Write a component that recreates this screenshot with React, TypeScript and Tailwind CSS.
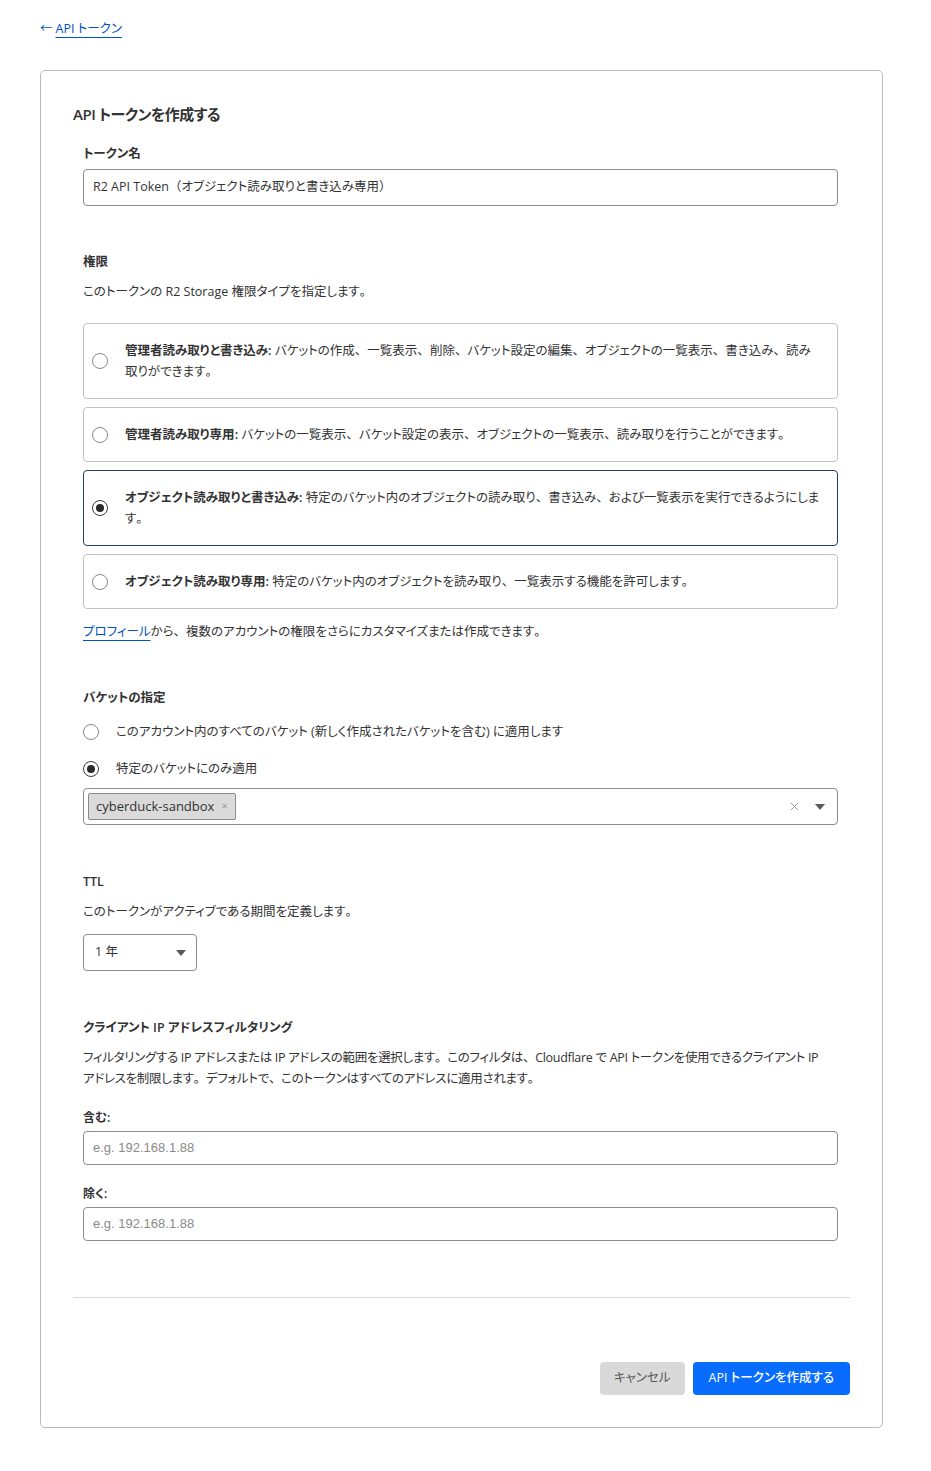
import React from "react";

const font = "font-['Open_Sans','Noto_Sans_CJK_JP',sans-serif] [font-feature-settings:'palt']";

// Proportional kana, but keep Japanese punctuation at full width.
function jp(text: string) {
  return text.split(/([、。（）])/).map((part, i) =>
    /^[、。（）]$/.test(part) ? (
      <span key={i} className="[font-feature-settings:normal]">
        {part}
      </span>
    ) : (
      <React.Fragment key={i}>{part}</React.Fragment>
    )
  );
}

function Radio({ checked }: { checked?: boolean }) {
  return (
    <span
      className={
        "flex h-4 w-4 shrink-0 items-center justify-center rounded-full border bg-white " +
        (checked ? "border-[#3c3c3c]" : "border-[#8a8a8a]")
      }
    >
      {checked && <span className="h-2 w-2 rounded-full bg-[#2b2b2b]" />}
    </span>
  );
}

function Caret() {
  return (
    <svg width="10" height="6" viewBox="0 0 10 6" className="shrink-0">
      <path d="M0 0 H10 L5 6 Z" fill="#595959" />
    </svg>
  );
}

function PermissionCard({
  title,
  body,
  checked,
}: {
  title: string;
  body: string;
  checked?: boolean;
}) {
  return (
    <div
      className={
        "flex items-center rounded-[4px] border bg-white py-4 pl-2 pr-4 " +
        (checked ? "border-[#1f3f63]" : "border-[#c2c2c2]")
      }
    >
      <Radio checked={checked} />
      <p className="ml-[17px] text-[12.5px] leading-[21px] text-[#333]">
        <span className="font-semibold">{title}:</span> {jp(body)}
      </p>
    </div>
  );
}

export default function App() {
  return (
    <div className={"min-h-[1471px] bg-white pb-11 pl-10 pr-12 pt-[19px] " + font}>
      <a href="#" className="flex items-center text-[12.5px] leading-5 text-[#0051c3]">
        <span className="mr-[3px]">←</span>
        <span className="underline decoration-[#0051c3] underline-offset-[4px]">API トークン</span>
      </a>

      <div className="mt-[31px] rounded-[5px] border border-[#bababa] bg-white px-8 pb-8 pt-8">
        <h1 className="text-[15px] font-semibold leading-[22px] tracking-[-0.5px] text-[#333]">API トークンを作成する</h1>

        <div className="pl-[10px] pr-[12px]">
          {/* token name */}
          <label className="mt-[19px] block text-[12.5px] font-semibold leading-5 text-[#333]">トークン名</label>
          <div className="mt-[5px] flex h-[37px] items-center rounded-[4px] border border-[#8c8c8c] px-[9px] text-[12.5px] text-[#333]">
            {jp("R2 API Token（オブジェクト読み取りと書き込み専用）")}
          </div>

          {/* permissions */}
          <h2 className="mt-[46px] text-[12.5px] font-semibold leading-5 text-[#333]">権限</h2>
          <p className="mt-[10px] text-[12.5px] leading-5 text-[#333]">
            {jp("このトークンの R2 Storage 権限タイプを指定します。")}
          </p>
          <div className="mt-[21px] flex flex-col gap-2">
            <PermissionCard
              title="管理者読み取りと書き込み"
              body="バケットの作成、一覧表示、削除、バケット設定の編集、オブジェクトの一覧表示、書き込み、読み取りができます。"
            />
            <PermissionCard
              title="管理者読み取り専用"
              body="バケットの一覧表示、バケット設定の表示、オブジェクトの一覧表示、読み取りを行うことができます。"
            />
            <PermissionCard
              checked
              title="オブジェクト読み取りと書き込み"
              body="特定のバケット内のオブジェクトの読み取り、書き込み、および一覧表示を実行できるようにします。"
            />
            <PermissionCard
              title="オブジェクト読み取り専用"
              body="特定のバケット内のオブジェクトを読み取り、一覧表示する機能を許可します。"
            />
          </div>
          <p className="mt-[13px] text-[12.5px] leading-5 text-[#333]">
            <a href="#" className="text-[#0051c3] underline underline-offset-[4px]">プロフィール</a>
            {jp("から、複数のアカウントの権限をさらにカスタマイズまたは作成できます。")}
          </p>

          {/* bucket scope */}
          <h2 className="mt-[46px] text-[12.5px] font-semibold leading-5 text-[#333]">バケットの指定</h2>
          <div className="mt-[14px] flex items-center text-[12.5px] leading-5 text-[#333]">
            <Radio />
            <span className="ml-[17px]">このアカウント内のすべてのバケット (新しく作成されたバケットを含む) に適用します</span>
          </div>
          <div className="mt-[17px] flex items-center text-[12.5px] leading-5 text-[#333]">
            <Radio checked />
            <span className="ml-[17px]">特定のバケットにのみ適用</span>
          </div>
          <div className="mt-[9px] flex h-[37px] items-center rounded-[4px] border border-[#8c8c8c] pl-1 pr-[12px]">
            <span className="flex h-[27px] items-center rounded-[2px] border border-[#8c8c8c] bg-[#dadada] pl-[7px] pr-[7px] text-[13px] text-[#333]">
              cyberduck-sandbox
              <span className="ml-[7px] text-[11px] text-[#999]">×</span>
            </span>
            <span className="ml-auto flex items-center gap-[16px]">
              <svg width="9" height="9" viewBox="0 0 9 9">
                <path d="M1 1 L8 8 M8 1 L1 8" stroke="#9a9a9a" strokeWidth="1" />
              </svg>
              <Caret />
            </span>
          </div>

          {/* TTL */}
          <h2 className="mt-[47px] text-[12.5px] font-semibold leading-5 text-[#333]">TTL</h2>
          <p className="mt-[10px] text-[12.5px] leading-5 text-[#333]">{jp("このトークンがアクティブである期間を定義します。")}</p>
          <div className="mt-[12px] flex h-[37px] w-[114px] items-center justify-between rounded-[4px] border border-[#8c8c8c] pl-[11px] pr-[10px] text-[12.5px] text-[#333]">
            <span>1 年</span>
            <Caret />
          </div>

          {/* client IP filtering */}
          <h2 className="mt-[47px] text-[12.5px] font-semibold leading-5 text-[#333]">クライアント IP アドレスフィルタリング</h2>
          <p className="mt-[9px] text-[12.5px] leading-[21px] tracking-[-0.3px] text-[#333]">
            {jp(
              "フィルタリングする IP アドレスまたは IP アドレスの範囲を選択します。このフィルタは、Cloudflare で API トークンを使用できるクライアント IP"
            )}
            <br />
            {jp("アドレスを制限します。デフォルトで、このトークンはすべてのアドレスに適用されます。")}
          </p>
          <label className="mt-[21px] block text-[12px] font-semibold leading-4 text-[#333]">含む:</label>
          <div className="mt-[5px] flex h-[34px] items-center rounded-[4px] border border-[#8c8c8c] px-[9px] font-['Liberation_Sans',Arial,sans-serif] text-[13px] text-[#8a8a8a]">
            e.g. 192.168.1.88
          </div>
          <label className="mt-[21px] block text-[12px] font-semibold leading-4 text-[#333]">除く:</label>
          <div className="mt-[5px] flex h-[34px] items-center rounded-[4px] border border-[#8c8c8c] px-[9px] font-['Liberation_Sans',Arial,sans-serif] text-[13px] text-[#8a8a8a]">
            e.g. 192.168.1.88
          </div>
        </div>

        <div className="mt-[56px] border-t border-[#d6d6d6]" />

        <div className="mt-[64px] flex justify-end gap-2">
          <button className="h-[33px] rounded-[4px] bg-[#d9d9d9] px-[14px] text-[12.5px] text-[#555]">キャンセル</button>
          <button className="h-[33px] rounded-[4px] bg-[#086dff] px-4 text-[12.5px] font-medium text-white">
            API トークンを作成する
          </button>
        </div>
      </div>
    </div>
  );
}
